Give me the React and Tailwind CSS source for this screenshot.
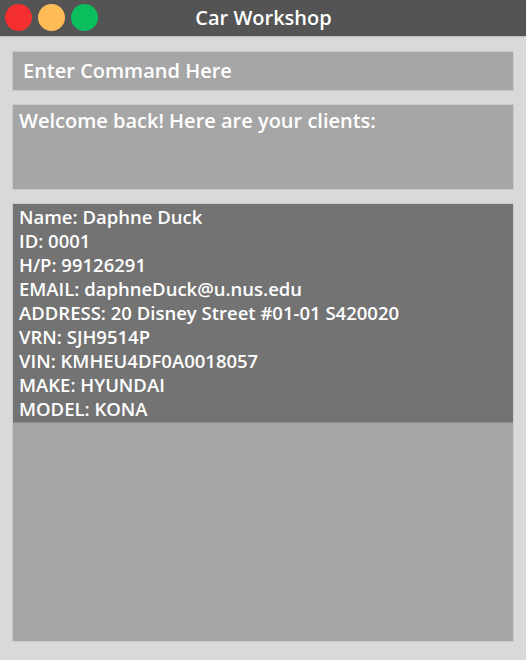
export default function App() {
  const lines = [
    "Name: Daphne Duck",
    "ID: 0001",
    "H/P: 99126291",
    "EMAIL: daphneDuck@u.nus.edu",
    "ADDRESS: 20 Disney Street #01-01 S420020",
    "VRN: SJH9514P",
    "VIN: KMHEU4DF0A0018057",
    "MAKE: HYUNDAI",
    "MODEL: KONA",
  ];
  return (
    <div className="w-[526px] h-[660px] bg-[#d9d9d9] flex flex-col text-white font-semibold" style={{ fontFamily: '"Open Sans", sans-serif' }}>
      <div className="h-[37px] bg-[#545454] relative flex items-center justify-center shrink-0 border-b border-[#bdbdbd]">
        <div className="absolute left-[5px] top-[4px] flex gap-[6px]">
          <div className="w-[27px] h-[27px] rounded-full bg-[#f52f2f]" />
          <div className="w-[27px] h-[27px] rounded-full bg-[#ffbb55]" />
          <div className="w-[27px] h-[27px] rounded-full bg-[#0bbf5f]" />
        </div>
        <span className="text-[20px] leading-none pl-[1px]">Car Workshop</span>
      </div>
      <div className="flex flex-col gap-[13px] px-[12px] pt-[14px] pb-[18px] flex-1">
        <div className="h-[40px] bg-[#a6a6a6] border border-[#c9c9c9] flex items-center px-[10px] text-[20px]">
          Enter Command Here
        </div>
        <div className="h-[86px] bg-[#a6a6a6] border border-[#c9c9c9] px-[6px] pt-[1px] text-[20px]">
          Welcome back! Here are your clients:
        </div>
        <div className="flex-1 bg-[#a6a6a6] border border-[#c9c9c9] flex flex-col">
          <div className="bg-[#737373] px-[6px] pt-[1px] pb-[1px] text-[18.5px] leading-[24px] border-b border-[#8a8a8a]">
            {lines.map((l) => (
              <div key={l}>{l}</div>
            ))}
          </div>
        </div>
      </div>
    </div>
  );
}
